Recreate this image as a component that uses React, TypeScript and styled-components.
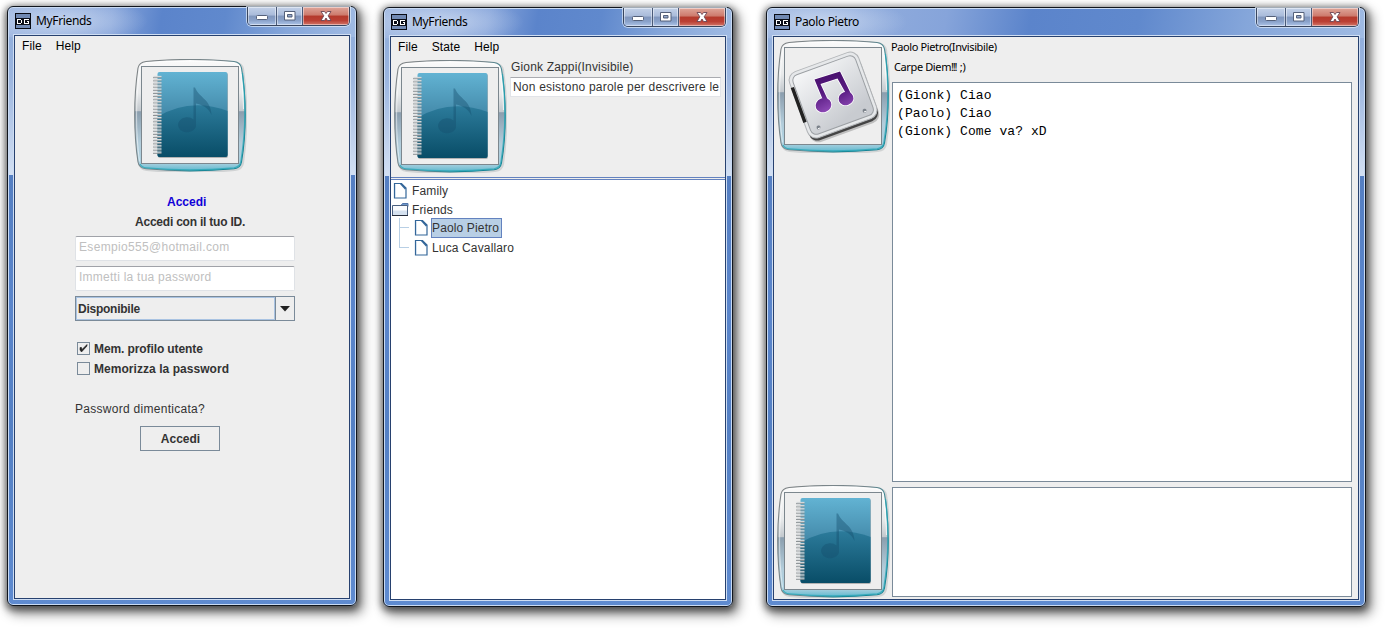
import React from "react";
import styled, { createGlobalStyle } from "styled-components";

const Global = createGlobalStyle`
  * { box-sizing: border-box; }
  body { margin: 0; background: #fff; overflow: hidden; }
  button { padding: 0; font: inherit; }
`;

const Desktop = styled.main`
  display: flex;
  align-items: flex-start;
  width: 1385px;
  height: 629px;
  padding-left: 7px;
  font: 12px/16px "Liberation Sans", Arial, sans-serif;
  color: #333;
  white-space: nowrap;
`;

const Frame = styled.section<{ $width: number; $top: number; $left?: number }>`
  flex: none;
  display: flex;
  flex-direction: column;
  width: ${(p) => p.$width}px;
  height: 600px;
  margin: ${(p) => p.$top}px 0 0 ${(p) => p.$left ?? 0}px;
  padding: 0 6px 6px;
  border: 1px solid #10151d;
  border-radius: 6px;
  background:
    radial-gradient(ellipse closest-side, rgba(222, 232, 247, 0.65), rgba(222, 232, 247, 0.3) 55%, transparent) -30px -10px / 170px 48px no-repeat,
    linear-gradient(100deg, #9db6e0 0, #86a4da 30%, #5b84cb 44%, #6089cd 62%, #85a6da 80%, #a0bbe3 100%) 0 0 / 100% 30px no-repeat,
    linear-gradient(#92afdc 30px, #9bb5df 70px, #d3e0f3 168px, #557fc2 168px, #5b86cc 300px, #5480c4 420px, #5f8bd0 100%);
  box-shadow:
    inset 0 0 0 1px #c9daf2,
    0 2px 7px 2px rgba(0, 0, 0, 0.5),
    4px 6px 12px 2px rgba(0, 0, 0, 0.42);
`;

const TitleBar = styled.header`
  flex: none;
  display: flex;
  align-items: flex-start;
  height: 28px;
  padding-left: 1px;
`;

const AppBadge = styled.svg`
  width: 16px;
  height: 16px;
  margin-top: 6px;
`;

const Title = styled.h1`
  flex: 1;
  margin: 5px 0 0 5px;
  font: 400 12px/18px "Noto Sans", "Open Sans", sans-serif;
  letter-spacing: -0.35px;
  color: #000;
`;

const Controls = styled.div`
  display: flex;
  height: 19px;
  border: 1px solid #39465f;
  border-top: 0;
  border-radius: 0 0 5px 5px;
  overflow: hidden;
  box-shadow: 0 0 0 1px rgba(225, 236, 250, 0.7);
`;

const ControlButton = styled.button<{ $width: number; $close?: boolean }>`
  display: flex;
  justify-content: center;
  width: ${(p) => p.$width}px;
  height: 18px;
  border: 0;
  border-left: ${(p) => (p.$width === 28 ? "0" : "1px solid #4a5a78")};
  background: ${(p) =>
    p.$close
      ? "linear-gradient(#dfa69a 0, #cd7a6c 45%, #b43a2c 50%, #bb4034 75%, #d27669 100%)"
      : "linear-gradient(#c3d1e8 0, #a9bbda 45%, #8197bd 50%, #8aa2ca 75%, #adc4e8 100%)"};
  box-shadow: inset 0 0 0 1px rgba(255, 255, 255, 0.45);
`;

const Client = styled.div`
  flex: 1;
  min-height: 0;
  display: flex;
  flex-direction: column;
  border: 1px solid #27416f;
  box-shadow: 0 0 0 1px #cfdef3;
  background: #eee;
`;

const MenuBar = styled.nav`
  flex: none;
  display: flex;
  gap: 14px;
  height: 23px;
  padding: 2px 7px 0;
  color: #000;
  letter-spacing: 0.1px;
`;

const LoginForm = styled.form`
  display: flex;
  flex-direction: column;
  width: 220px;
  margin-left: 60px;
`;

const FrameHolder = styled.div`
  height: 113px;
  margin-left: 59px;
`;

const FormHeading = styled.div<{ $blue?: boolean }>`
  height: ${(p) => (p.$blue ? 20 : 22)}px;
  width: 230px;
  padding-left: ${(p) => (p.$blue ? 92 : 60)}px;
  margin-top: ${(p) => (p.$blue ? 22 : 0)}px;
  font-weight: 700;
  letter-spacing: ${(p) => (p.$blue ? 0 : -0.22)}px;
  color: ${(p) => (p.$blue ? "#1000d8" : "#333")};
`;

const Input = styled.div`
  height: 25px;
  margin-bottom: 5px;
  padding: 2px 3px 0;
  border: 1px solid #dfe2e6;
  border-top-color: #a0a2a8;
  border-radius: 2px;
  background: #fff;
  color: #c0c0c0;
  letter-spacing: 0.32px;
`;

const PasswordInput = styled(Input)`
  letter-spacing: 0.25px;
`;

const Select = styled.div`
  display: flex;
  height: 25px;
  border: 1px solid #7a8a99;
  font-weight: 700;
  letter-spacing: -0.25px;
`;

const SelectValue = styled.span`
  flex: 1;
  padding: 3px 1px;
  border: 1px solid #a9c3e2;
`;

const SelectArrow = styled.span`
  display: flex;
  align-items: center;
  justify-content: center;
  width: 19px;
  border-left: 1px solid #7a8a99;
`;

const Option = styled.label<{ $first?: boolean }>`
  display: flex;
  align-items: center;
  gap: 4px;
  height: 20px;
  margin-top: ${(p) => (p.$first ? 18 : 0)}px;
  padding-left: 2px;
  font-weight: 700;
  letter-spacing: ${(p) => (p.$first ? -0.1 : 0.05)}px;
`;

const Box = styled.span`
  display: flex;
  width: 13px;
  height: 13px;
  margin-top: -2px;
  border: 1px solid #7a8a99;
`;

const Forgot = styled.div`
  margin-top: 22px;
  letter-spacing: 0.28px;
`;

const SubmitButton = styled.button`
  width: 80px;
  height: 25px;
  margin: 9px 0 0 65px;
  border: 1px solid #7a8a99;
  background: #eee;
  color: #333;
  font-weight: 700;
  text-indent: 1px;
`;

const Profile = styled.div`
  display: flex;
  height: 117px;
  padding-left: 3px;
`;

const ProfileText = styled.div`
  margin-top: -1px;
  padding-left: 3px;
  letter-spacing: 0.16px;
`;

const ProfileName = styled.div`
  height: 18px;
  padding-left: 1px;
`;

const Motto = styled.div`
  width: 211px;
  height: 20px;
  padding: 1px 2px;
  border: 1px solid #e2e4e8;
  border-top-color: #a9abb0;
  background: #fff;
  overflow: hidden;
  letter-spacing: 0.2px;
`;

const Divider = styled.div`
  flex: none;
  height: 3px;
  border: solid #6382bf;
  border-width: 1px 0;
`;

const Tree = styled.div`
  flex: 1;
  background: #fff;
  padding: 1px 0 0 1px;
`;

const TreeRow = styled.div<{ $child?: boolean }>`
  display: flex;
  align-items: center;
  height: ${(p) => (p.$child ? 20 : 19)}px;
  gap: ${(p) => (p.$child ? 1 : 2)}px;
`;

const TreeLabel = styled.span<{ $selected?: boolean }>`
  padding: 1px ${(p) => (p.$selected ? 2 : 1)}px 1px 0;
  border: 1px solid ${(p) => (p.$selected ? "#6382bf" : "transparent")};
  background: ${(p) => (p.$selected ? "#b8cfe5" : "transparent")};
  letter-spacing: 0.14px;
`;

const Children = styled.div`
  margin-top: -1px;
`;

const ChatLayout = styled.div`
  flex: 1;
  display: grid;
  grid-template-columns: 118px 460px;
  grid-template-rows: 45px 400px 5px 110px;
`;

const Side = styled.aside`
  grid-row: 1 / 5;
  display: flex;
  flex-direction: column;
  justify-content: space-between;
  height: 561px;
  padding: 3px 0 0 3px;
`;

const ContactInfo = styled.div`
  margin-left: -1px;
  font: 11px/20px "Noto Sans", sans-serif;
  letter-spacing: -0.38px;
  color: #000;
`;

const Quote = styled.div`
  padding-left: 3px;
`;

const Bangs = styled.span`
  margin-right: 1px;
  letter-spacing: -1.2px;
`;

const History = styled.div`
  grid-row: 2;
  grid-column: 2;
  padding: 4px;
  border: 1px solid #7a8a99;
  background: #fff;
  color: #000;
  font: 13px/18px "Liberation Mono", "Courier New", monospace;
  letter-spacing: 0.08px;
  white-space: pre;
`;

const Composer = styled.div`
  grid-row: 4;
  grid-column: 2;
  border: 1px solid #7a8a99;
  background: #fff;
`;

const Avatar = styled.svg`
  display: block;
  flex: none;
  width: 113px;
  height: 113px;
`;

function Badge() {
  return (
    <AppBadge viewBox="0 0 16 16" shapeRendering="crispEdges">
      <rect x=".5" y=".5" width="15" height="15" fill="#7089b3" stroke="#080b14" />
      <rect x="1" y="5" width="14" height="7" fill="#0a0e18" />
      <path d="M2.500 6.500h3l1 1v2l-1 1h-3zM13.500 6.500h-4v4h4v-2h-2" fill="none" stroke="#fff" />
    </AppBadge>
  );
}

function AvatarFrame({ id, children }: { id: string; children: React.ReactNode }) {
  return (
    <Avatar viewBox="0 0 113 113">
      <defs>
        <linearGradient id={`${id}g`} x2="0" y2="1">
          <stop offset="0" stopColor="#fafafa" />
          <stop offset=".3" stopColor="#e9ebec" />
          <stop offset=".46" stopColor="#c3c9ce" />
          <stop offset=".47" stopColor="#8b9eae" />
          <stop offset=".75" stopColor="#b3cddb" />
          <stop offset=".93" stopColor="#abd0df" />
          <stop offset="1" stopColor="#5fb9cf" />
        </linearGradient>
        <linearGradient id={`${id}s`} x2="1" y2=".6">
          <stop offset="0" stopColor="#808486" />
          <stop offset=".6" stopColor="#75868c" />
          <stop offset=".85" stopColor="#1c8796" />
          <stop offset="1" stopColor="#157f90" />
        </linearGradient>
        <linearGradient id={`${id}b`} x2="0" y2="1">
          <stop offset="0" stopColor="#62b3d3" />
          <stop offset=".45" stopColor="#468dad" />
          <stop offset="1" stopColor="#257391" />
        </linearGradient>
        <linearGradient id={`${id}w`} x2="0" y2="1">
          <stop offset="0" stopColor="#2c7b9b" />
          <stop offset="1" stopColor="#084c66" />
        </linearGradient>
        <linearGradient id={`${id}p`} x2=".4" y2="1">
          <stop offset="0" stopColor="#f7f8f9" />
          <stop offset="1" stopColor="#c8cbd0" />
        </linearGradient>
        <linearGradient id={`${id}n`} gradientUnits="userSpaceOnUse" x1="50" y1="32" x2="56" y2="72">
          <stop offset="0" stopColor="#470f6c" />
          <stop offset=".5" stopColor="#571a80" />
          <stop offset="1" stopColor="#8f4bb8" />
        </linearGradient>
        <clipPath id={`${id}c`}>
          <rect x="23.500" y="13" width="70" height="85" rx="2" />
        </clipPath>
      </defs>
      <path
        d="M12 2.500C38 .2 74 .2 100 2.500Q107 3.500 108 9C112.300 38 112.300 74 108 103Q107 109 100 109.800C74 112.300 38 112.300 12 109.800Q5.500 109 4.500 103C-.2 74 -.2 38 4.500 9Q5.500 3.500 12 2.500Z"
        fill="none" stroke="#9aa0a3" strokeWidth="2.500" opacity=".35" transform="translate(.8 1)"
      />
      <path
        d="M12 2.500C38 -.2 74 -.2 100 2.500Q106.500 3.500 107.500 9C112.500 38 112.500 74 107.500 103Q106.500 109 100 109.800C74 112.300 38 112.300 12 109.800Q5 109 4 103C-.4 74 -.4 38 4 9Q5 3.500 12 2.500Z"
        fill={`url(#${id}g)`} stroke={`url(#${id}s)`} strokeWidth="1.100"
      />
      <path d="M12 4C38 1.500 74 1.500 100 4Q105 5 106 9.500C108 22 109.300 36 109.500 50" fill="none" stroke="#fff" strokeOpacity=".7" />
      <path d="M108.500 14C112 42 111.500 74 106.800 103Q105.500 108 100 108.800C74 111.300 38 111.300 12 108.800Q8 108.500 6 105" fill="none" stroke="#28a5b6" strokeWidth="1.300" strokeOpacity=".75" />
      <path d="M6 9.500C1.500 38 1.500 74 5.500 102.500" fill="none" stroke="#fff" strokeOpacity=".55" />
      <rect x="7.500" y="7.500" width="97" height="97" fill="#eee" stroke="#7c878e" />
      {children}
    </Avatar>
  );
}

function NotebookAvatar({ id }: { id: string }) {
  const rings = Array.from({ length: 25 }, (_, i) => 17.5 + i * 3.15);
  return (
    <AvatarFrame id={id}>
      <rect x="24" y="14" width="70" height="85" rx="2" fill="#777" opacity=".5" />
      <g clipPath={`url(#${id}c)`}>
        <rect x="23" y="13" width="71" height="86" fill={`url(#${id}b)`} />
        <path d="M23 58Q56 38 94 52V99H23Z" fill={`url(#${id}w)`} />
        <path d="M59.500 28.500h1.500C65 39 77 40 77.500 56C74 48 68 46 62 44.500V67A9 7.500 0 1 1 59.500 60.500Z" fill="#164e6d" opacity=".42" />
      </g>
      {rings.map((y) => (
        <g key={y}>
          <path d={`M19 ${y + 1.2}h8.500`} stroke="#8b9194" strokeWidth="1" />
          <path d={`M19.500 ${y}h8`} stroke="#d5d9db" strokeWidth="1.300" />
        </g>
      ))}
    </AvatarFrame>
  );
}

function MusicAvatar({ id }: { id: string }) {
  return (
    <AvatarFrame id={id}>
      <g transform="rotate(-20 56 54)">
        <rect x="20" y="27" width="73" height="68" rx="9" fill="#777" opacity=".4" />
        <rect x="19.500" y="25" width="73" height="68" rx="9" fill="#444" />
        <rect x="19" y="20" width="73.500" height="70" rx="9" fill="#e6e8ea" stroke="#b3b6b9" />
        <rect x="22.500" y="23.500" width="66.500" height="63" rx="6" fill={`url(#${id}p)`} stroke="#9b9fa3" />
        <path d="M20 34v37" stroke="#222" strokeWidth="3.500" />
        <circle cx="31" cy="80.500" r="2" fill="#7b828a" />
        <circle cx="80" cy="80.500" r="2" fill="#7b828a" />
        <path d="M30 81.500h2.500M79 81.500h2.500" stroke="#fff" />
      </g>
      {["#fff", `url(#${id}n)`].map((paint, i) => (
        <g key={paint} fill={paint} stroke={paint} strokeWidth={i ? 0 : 1.6}>
          <path d="M37.500 39.500L63 31.500L75.500 57L71.500 58L60.500 38.500L43.500 44L52.500 63.500L48 65Z" />
          <ellipse cx="46.500" cy="65.200" rx="8" ry="7" transform="rotate(-20 46.500 65.200)" />
          <ellipse cx="69" cy="58.500" rx="7.500" ry="6.700" transform="rotate(-20 69 58.500)" />
        </g>
      ))}
    </AvatarFrame>
  );
}

function WindowFrame(props: { title: string; width: number; top: number; left?: number; children: React.ReactNode }) {
  return (
    <Frame $width={props.width} $top={props.top} $left={props.left}>
      <TitleBar>
        <Badge />
        <Title>{props.title}</Title>
        <Controls>
          <ControlButton $width={28} aria-label="Minimize">
            <svg width="14" height="18"><rect x="1.500" y="8.500" width="11" height="4" rx="1" fill="#fff" stroke="#55617a" /></svg>
          </ControlButton>
          <ControlButton $width={26} aria-label="Maximize">
            <svg width="13" height="18"><path d="M1.500 4.500h10.500v8.500h-10.500zM4.500 7.500v2.500h4.500v-2.500z" fill="#fff" fillRule="evenodd" stroke="#55617a" /></svg>
          </ControlButton>
          <ControlButton $width={47} $close aria-label="Close">
            <svg width="14" height="18"><path d="M2 4.500h3.500L7 6.500l1.500-2H12L9.200 8.800L12 13.500H8.500L7 11l-1.500 2.500H2L4.800 8.800Z" fill="#fff" stroke="#6b4552" strokeWidth=".9" /></svg>
          </ControlButton>
        </Controls>
      </TitleBar>
      <Client>{props.children}</Client>
    </Frame>
  );
}

function FileIcon() {
  return (
    <svg width="17" height="18" viewBox="0 0 17 18">
      <path d="M2.500 1.500h7l4.500 4.500v10H2.500z" fill="#fff" stroke="#336699" strokeWidth="1.200" />
      <path d="M3.500 2.500v12.500" stroke="#d4e2f0" />
      <path d="M8.500 1.500L13.500 7" fill="none" stroke="#336699" strokeWidth="1.600" />
    </svg>
  );
}

function FolderIcon() {
  return (
    <svg width="17" height="18" viewBox="0 0 17 18">
      <path d="M9 4.500l1.500-2h5.500v3" fill="#6f98cb" stroke="#5276ac" />
      <path d="M.5 4.500H15.500v10.500H.5z" fill="#fbfcfe" />
      <path d="M1 9.500h14v5H1z" fill="#d5e1ef" />
      <path d="M.5 15V4.500H15.500V15" fill="none" stroke="#4b6080" />
      <path d="M0 14.500h16" stroke="#262d3b" />
    </svg>
  );
}

function Branch({ last }: { last?: boolean }) {
  return (
    <svg width="20" height="20" viewBox="0 0 20 20" shapeRendering="crispEdges">
      <path d={`M7.500 0V${last ? 10 : 20}M7 9.500h10`} stroke="#b8cfe5" fill="none" />
    </svg>
  );
}

export default function App() {
  return (
    <Desktop>
      <Global />
      <WindowFrame title="MyFriends" width={350} top={6}>
        <MenuBar><span>File</span><span>Help</span></MenuBar>
        <LoginForm>
          <FrameHolder><NotebookAvatar id="login" /></FrameHolder>
          <FormHeading $blue>Accedi</FormHeading>
          <FormHeading>Accedi con il tuo ID.</FormHeading>
          <Input>Esempio555@hotmail.com</Input>
          <PasswordInput>Immetti la tua password</PasswordInput>
          <Select>
            <SelectValue>Disponibile</SelectValue>
            <SelectArrow><svg width="10" height="6"><path d="M0 0h10L5 5.500z" fill="#222" /></svg></SelectArrow>
          </Select>
          <Option $first>
            <Box><svg width="11" height="11"><path d="M2 4.500v2.500l1.500 2L9 3V1.500L4 6.500L3.500 4.500z" fill="#222" stroke="#222" strokeWidth=".6" /></svg></Box>
            Mem. profilo utente
          </Option>
          <Option><Box />Memorizza la password</Option>
          <Forgot>Password dimenticata?</Forgot>
          <SubmitButton type="button">Accedi</SubmitButton>
        </LoginForm>
      </WindowFrame>

      <WindowFrame title="MyFriends" width={350} top={7} left={26}>
        <MenuBar><span>File</span><span>State</span><span>Help</span></MenuBar>
        <Profile>
          <NotebookAvatar id="me" />
          <ProfileText>
            <ProfileName>Gionk Zappi(Invisibile)</ProfileName>
            <Motto>Non esistono parole per descrivere le</Motto>
          </ProfileText>
        </Profile>
        <Divider />
        <Tree>
          <TreeRow><FileIcon /><TreeLabel>Family</TreeLabel></TreeRow>
          <TreeRow><FolderIcon /><TreeLabel>Friends</TreeLabel></TreeRow>
          <Children>
            <TreeRow $child><Branch /><FileIcon /><TreeLabel $selected>Paolo Pietro</TreeLabel></TreeRow>
            <TreeRow $child><Branch last /><FileIcon /><TreeLabel>Luca Cavallaro</TreeLabel></TreeRow>
          </Children>
        </Tree>
      </WindowFrame>

      <WindowFrame title="Paolo Pietro" width={600} top={7} left={33}>
        <ChatLayout>
          <Side>
            <MusicAvatar id="friend" />
            <NotebookAvatar id="own" />
          </Side>
          <ContactInfo>
            <div>Paolo Pietro(Invisibile)</div>
            <Quote>Carpe Diem<Bangs>!!!</Bangs> ;)</Quote>
          </ContactInfo>
          <History>{"(Gionk) Ciao\n(Paolo) Ciao\n(Gionk) Come va? xD"}</History>
          <Composer />
        </ChatLayout>
      </WindowFrame>
    </Desktop>
  );
}
